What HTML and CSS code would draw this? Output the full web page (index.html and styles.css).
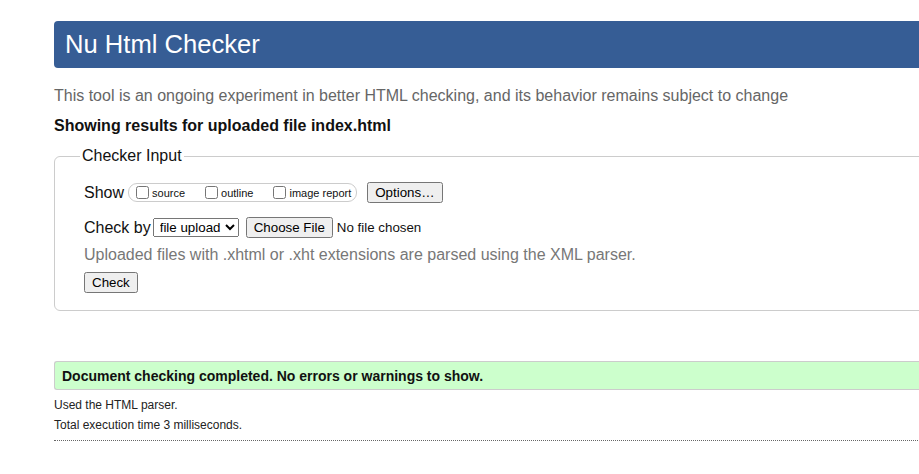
FILE: index.html
```html
<!DOCTYPE html>
<html lang="en">
<head>
<meta charset="utf-8">
<title>Nu Html Checker</title>
<link rel="stylesheet" href="styles.css">
</head>
<body>
<div class="page">
  <h1 class="title">Nu Html Checker</h1>
  <p class="intro">This tool is an ongoing experiment in better HTML checking, and its behavior remains subject to change</p>
  <p class="results-for">Showing results for uploaded file index.html</p>
  <form class="checker">
    <fieldset class="checker-input">
      <legend class="legend">Checker Input</legend>
      <div class="row">
        <span class="label">Show</span>
        <span class="show-group">
          <label class="opt"><input type="checkbox" class="cb"><span>source</span></label>
          <label class="opt"><input type="checkbox" class="cb"><span>outline</span></label>
          <label class="opt"><input type="checkbox" class="cb"><span>image report</span></label>
        </span>
        <button type="button" class="btn options-btn">Options…</button>
      </div>
      <div class="row row-check-by">
        <span class="label label-tight">Check by</span>
        <select class="select"><option>file upload</option></select>
        <input type="file" class="file">
      </div>
      <p class="hint">Uploaded files with .xhtml or .xht extensions are parsed using the XML parser.</p>
      <div class="row row-submit">
        <button type="button" class="btn">Check</button>
      </div>
    </fieldset>
  </form>
  <p class="success">Document checking completed. No errors or warnings to show.</p>
  <p class="stats">Used the HTML parser.</p>
  <p class="stats">Total execution time 3 milliseconds.</p>
  <hr class="rule">
</div>
</body>
</html>
```

FILE: styles.css
```css
html, body {
  margin: 0;
  padding: 0;
  background: #fff;
  overflow: hidden;
}
body {
  font-family: "Liberation Sans", Arial, sans-serif;
  color: #111;
}
.page {
  margin-left: 54px;
  width: 1000px;
  padding-top: 21px;
}
.title {
  margin: 0;
  height: 47px;
  line-height: 47px;
  padding-left: 11px;
  font-size: 25.6px;
  font-weight: normal;
  color: #fff;
  background: #365d95;
  border-radius: 4px 0 0 4px;
}
.intro {
  margin: 18px 0 0;
  font-size: 16px;
  line-height: 20px;
  color: #666;
}
.results-for {
  margin: 11px 0 0;
  font-size: 16px;
  line-height: 18px;
  font-weight: bold;
}
.checker {
  margin: 12px 0 0;
}
.checker-input {
  margin: 0;
  padding: 7px 26px 17px 29px;
  border: 1px solid #ccc;
  border-radius: 6px;
}
.legend {
  padding: 0 2px;
  margin-left: -4px;
  font-size: 16px;
  line-height: 18px;
}
.row {
  display: flex;
  align-items: center;
  margin: 10px 0 0;
}
.row-check-by {
  margin-top: 14px;
}
.row-submit {
  margin-top: 7px;
}
.label {
  font-size: 16px;
  margin-right: 4px;
}
.label-tight {
  margin-right: 2px;
}
.show-group {
  display: inline-flex;
  align-items: center;
  height: 17px;
  border: 1px solid #ccc;
  border-radius: 9px;
  padding: 0 5px 0 7px;
  margin-right: 10px;
}
.opt {
  display: inline-flex;
  align-items: center;
  font-size: 11px;
  margin-right: 20px;
}
.opt:last-child {
  margin-right: 0;
}
.cb {
  margin: 0 3px 0 0;
  width: 13px;
  height: 13px;
}
.btn {
  font: 13.33px "Liberation Sans", Arial, sans-serif;
  padding: 1px 6px;
  height: 21px;
}
.options-btn {
  padding: 1px 6px;
}
.select {
  font: 13.33px "Liberation Sans", Arial, sans-serif;
  height: 19px;
  padding: 0 1px 0 2px;
  margin-right: 7px;
}
.file {
  font: 13.33px "Liberation Sans", Arial, sans-serif;
}
.hint {
  margin: 7px 0 0;
  font-size: 16px;
  line-height: 20px;
  color: #777;
}
.success {
  margin: 50px 0 0;
  height: 27px;
  line-height: 28px;
  padding-left: 7px;
  font-size: 14px;
  font-weight: bold;
  background: #ccffcc;
  border: 1px solid #ccc;
  border-right: none;
  border-radius: 3px 0 0 3px;
}
.stats {
  margin: 6px 0 0;
  font-size: 12px;
  line-height: 14px;
  color: #222;
}
.success + .stats {
  margin-top: 8px;
}
.rule {
  margin: 8px 0 0;
  border: 0;
  border-top: 1px dotted #666;
}
```
